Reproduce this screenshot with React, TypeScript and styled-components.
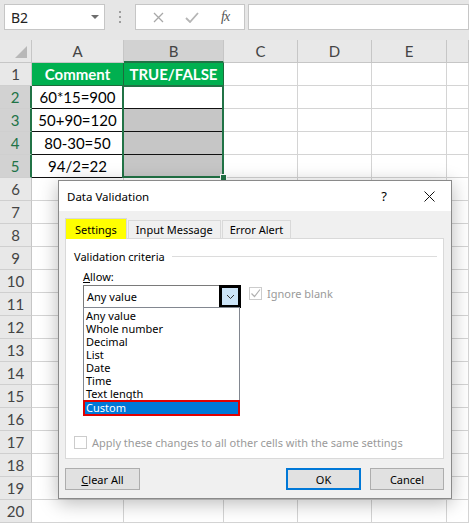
import React from 'react';
import styled, { createGlobalStyle, css } from 'styled-components';

const Global = createGlobalStyle`
  html, body { margin: 0; padding: 0; background: #fff; }
  body { width: 469px; height: 524px; overflow: hidden; }
`;

const Page = styled.div`
  position: relative;
  width: 469px;
  height: 524px;
  overflow: hidden;
  background: #fff;
  font-family: Lato, "Liberation Sans", sans-serif;
`;

/* ---------- formula bar ---------- */
const TopBar = styled.div`
  height: 40px;
  box-sizing: border-box;
  background: #e6e6e6;
  display: flex;
  align-items: flex-start;
  padding: 4px 0 0 4px;
`;

const Field = styled.div<{ $w?: number; $grow?: boolean }>`
  box-sizing: border-box;
  height: 26px;
  background: #fff;
  border: 1px solid #c6c6c6;
  display: flex;
  align-items: center;
  ${p => (p.$grow ? 'flex: 1;' : `width: ${p.$w}px;`)}
`;

const NameBox = styled(Field)`
  justify-content: space-between;
  padding: 0 5px 0 6px;
  font: 14px "Noto Sans", sans-serif;
  color: #222;
`;

const Caret = styled.span`
  width: 0;
  height: 0;
  border-left: 4px solid transparent;
  border-right: 4px solid transparent;
  border-top: 4px solid #6d6d6d;
`;

const Grip = styled.div`
  width: 30px;
  height: 26px;
  display: flex;
  flex-direction: column;
  align-items: center;
  justify-content: center;
  gap: 3px;
`;

const GripDot = styled.span`
  width: 2px;
  height: 2px;
  background: #9d9d9d;
`;

const FxBox = styled(Field)`
  margin-right: 3px;
  justify-content: space-around;
  padding: 0 4px 0 6px;
`;

const FxText = styled.span`
  font: italic 14px "Liberation Serif", serif;
  color: #555;
  letter-spacing: -1px;
`;

/* ---------- sheet ---------- */
const Sheet = styled.div`
  display: grid;
  grid-template-columns: 32px 92px 100px 74px 74px 75px 1fr;
  grid-template-rows: repeat(21, 23px);
  font-size: 15px;
`;

const Slot = css<{ $r: number; $c: number }>`
  grid-row: ${p => p.$r + 1};
  grid-column: ${p => p.$c + 1};
`;

const Corner = styled.div<{ $r: number; $c: number }>`
  ${Slot}
  box-sizing: border-box;
  background: #e8e8e8;
  border-right: 1px solid #c6c6c6;
  border-bottom: 1px solid #c6c6c6;
  display: flex;
  align-items: flex-end;
  justify-content: flex-end;
  padding: 0 4px 4px 0;
`;

const CornerTri = styled.span`
  width: 0;
  height: 0;
  border-left: 12px solid transparent;
  border-bottom: 12px solid #b8b8b8;
`;

const ColHead = styled.div<{ $r: number; $c: number; $sel?: boolean }>`
  ${Slot}
  box-sizing: border-box;
  background: ${p => (p.$sel ? '#d2d2d2' : '#e8e8e8')};
  border-right: 1px solid #c6c6c6;
  border-bottom: ${p => (p.$sel ? '2px solid #217346' : '1px solid #c6c6c6')};
  color: #444;
  display: flex;
  align-items: center;
  justify-content: center;
`;

const RowHead = styled.div<{ $r: number; $c: number; $sel?: boolean }>`
  ${Slot}
  box-sizing: border-box;
  background: ${p => (p.$sel ? '#d2d2d2' : '#e8e8e8')};
  border-right: ${p => (p.$sel ? '2px solid #217346' : '1px solid #c6c6c6')};
  border-bottom: 1px solid #cfcfcf;
  color: ${p => (p.$sel ? '#217346' : '#444')};
  display: flex;
  align-items: center;
  justify-content: center;
`;

type Kind = 'plain' | 'title' | 'data';

const Cell = styled.div<{ $r: number; $c: number; $kind: Kind; $fill?: boolean }>`
  ${Slot}
  box-sizing: border-box;
  border-right: 1px solid #d4d4d4;
  border-bottom: 1px solid #d4d4d4;
  display: flex;
  align-items: center;
  justify-content: center;
  color: #000;
  white-space: nowrap;
  overflow: hidden;
  ${p =>
    p.$kind === 'title' &&
    css`
      background: #00b050;
      color: #fff;
      font-weight: 700;
      border-color: #1d6b3c;
    `}
  ${p =>
    p.$kind === 'data' &&
    css`
      background: ${p.$fill ? '#c6c6c6' : '#fff'};
      border-color: #111;
    `}
`;

const Selection = styled.div`
  grid-column: 3;
  grid-row: 3 / 7;
  margin: -1px 0 0 -2px;
  border: 2px solid #217346;
  position: relative;
  pointer-events: none;
  &::after {
    content: '';
    position: absolute;
    right: -5px;
    bottom: -5px;
    width: 5px;
    height: 5px;
    background: #217346;
    border: 1px solid #fff;
  }
`;

/* ---------- dialog ---------- */
const Dialog = styled.div`
  position: absolute;
  left: 58px;
  top: 180px;
  width: 394px;
  height: 319px;
  box-sizing: border-box;
  border: 1px solid #8a8a8a;
  background: #f0f0f0;
  box-shadow: 0 4px 18px rgba(0, 0, 0, 0.28);
  display: flex;
  flex-direction: column;
  font: 11px "Noto Sans", sans-serif;
  color: #000;
`;

const TitleBar = styled.div`
  height: 30px;
  background: #fff;
  display: flex;
  align-items: center;
  padding-left: 8px;
  font-size: 11.5px;
`;

const TitleText = styled.span`
  flex: 1;
`;

const TitleBtn = styled.span<{ $w: number }>`
  width: ${p => p.$w}px;
  display: flex;
  justify-content: center;
  align-items: center;
  font-size: 13px;
`;

const Body = styled.div`
  flex: 1;
  display: flex;
  flex-direction: column;
  padding: 6px 7px 8px 6px;
`;

const TabRow = styled.div`
  height: 21px;
  display: flex;
  align-items: flex-end;
  gap: 1px;
`;

const Tab = styled.div<{ $active?: boolean }>`
  box-sizing: border-box;
  height: ${p => (p.$active ? 21 : 18)}px;
  padding: 0 ${p => (p.$active ? 9 : 7)}px;
  background: ${p => (p.$active ? '#ffff00' : '#f0f0f0')};
  border: 1px solid #d9d9d9;
  border-bottom: none;
  display: flex;
  align-items: center;
  margin-bottom: ${p => (p.$active ? -1 : 0)}px;
  position: relative;
`;

const Panel = styled.div`
  box-sizing: border-box;
  height: 221px;
  background: #fff;
  border: 1px solid #d9d9d9;
  padding: 9px 6px 0 8px;
  display: flex;
  flex-direction: column;
`;

const GroupHead = styled.div`
  height: 16px;
  display: flex;
  align-items: center;
  gap: 7px;
`;

const GroupLine = styled.span`
  flex: 1;
  height: 1px;
  background: #dcdcdc;
`;

const Indent = styled.div`
  padding-left: 9px;
  display: flex;
  flex-direction: column;
`;

const Label = styled.div`
  height: 16px;
  margin-top: 4px;
  display: flex;
  align-items: center;
`;

const U = styled.span`
  text-decoration: underline;
`;

const ComboRow = styled.div`
  margin-top: 1px;
  display: flex;
  align-items: flex-start;
  gap: 8px;
`;

const ComboCol = styled.div`
  width: 158px;
  display: flex;
  flex-direction: column;
`;

const Combo = styled.div`
  box-sizing: border-box;
  height: 23px;
  border: 1px solid #7a7a7a;
  display: flex;
  align-items: center;
  justify-content: space-between;
  padding-left: 3px;
`;

const DropBtn = styled.span`
  box-sizing: border-box;
  width: 22px;
  height: 23px;
  margin: -1px -1px -1px 0;
  border: 3px solid #000;
  background: #cce4f7;
  display: flex;
  align-items: center;
  justify-content: center;
`;

const List = styled.div`
  box-sizing: border-box;
  width: 157px;
  height: 109px;
  margin-top: -1px;
  border: 1px solid #828790;
  display: flex;
  flex-direction: column;
  padding-top: 1px;
  background: #fff;
`;

const Item = styled.div<{ $sel?: boolean }>`
  height: 13px;
  line-height: 13px;
  padding-left: 2px;
  white-space: nowrap;
  ${p =>
    p.$sel &&
    css`
      margin: 0 -1px;
      height: 16px;
      line-height: 12px;
      box-sizing: border-box;
      background: #0078d7;
      color: #fff;
      border: 2px solid #e00000;
      padding-left: 1px;
    `}
`;

const CheckRow = styled.div<{ $top?: number }>`
  display: flex;
  align-items: center;
  gap: 5px;
  color: #9a9a9a;
  margin-top: ${p => p.$top ?? 0}px;
  height: 16px;
`;

const CheckBox = styled.span`
  box-sizing: border-box;
  width: 13px;
  height: 13px;
  border: 1px solid #cccccc;
  background: #fff;
  display: flex;
  align-items: center;
  justify-content: center;
`;

const Footer = styled.div`
  margin-top: 9px;
  display: flex;
  align-items: center;
`;

const Button = styled.div<{ $def?: boolean; $w?: number; $mr?: number }>`
  box-sizing: border-box;
  width: ${p => p.$w ?? 75}px;
  height: 22px;
  background: #e1e1e1;
  border: ${p => (p.$def ? '2px solid #0078d7' : '1px solid #adadad')};
  display: flex;
  align-items: center;
  justify-content: center;
  margin-right: ${p => p.$mr ?? 0}px;
`;

const Spacer = styled.div`
  flex: 1;
`;

const cols = ['A', 'B', 'C', 'D', 'E', ''];
const dataA = ['60*15=900', '50+90=120', '80-30=50', '94/2=22'];
const listItems = ['Any value', 'Whole number', 'Decimal', 'List', 'Date', 'Time', 'Text length'];

function renderRow(r: number) {
  const cells: React.ReactNode[] = [];
  cells.push(
    <RowHead key={`h${r}`} $r={r} $c={0} $sel={r >= 2 && r <= 5}>
      {r}
    </RowHead>
  );
  for (let c = 0; c < cols.length; c++) {
    let kind: Kind = 'plain';
    let text = '';
    let fill = false;
    if (r === 1 && c < 2) {
      kind = 'title';
      text = c === 0 ? 'Comment' : 'TRUE/FALSE';
    } else if (r >= 2 && r <= 5 && c < 2) {
      kind = 'data';
      if (c === 0) text = dataA[r - 2];
      else fill = r >= 3;
    }
    cells.push(
      <Cell key={`${r}-${c}`} $r={r} $c={c + 1} $kind={kind} $fill={fill}>
        {text}
      </Cell>
    );
  }
  return cells;
}

export default function App() {
  const rows: number[] = [];
  for (let i = 1; i <= 20; i++) rows.push(i);
  return (
    <Page>
      <Global />
      <TopBar>
        <NameBox $w={101}>
          <span>B2</span>
          <Caret />
        </NameBox>
        <Grip>
          <GripDot />
          <GripDot />
          <GripDot />
        </Grip>
        <FxBox $w={110}>
          <svg width="11" height="11" viewBox="0 0 11 11">
            <path d="M1 1 L10 10 M10 1 L1 10" stroke="#a8a8a8" strokeWidth="1.3" fill="none" />
          </svg>
          <svg width="14" height="11" viewBox="0 0 14 11">
            <path d="M1 6 L5 10 L13 1" stroke="#b5b5b5" strokeWidth="1.8" fill="none" />
          </svg>
          <FxText>fx</FxText>
        </FxBox>
        <Field $grow />
      </TopBar>
      <Sheet>
        <Corner $r={0} $c={0}>
          <CornerTri />
        </Corner>
        {cols.map((c, i) => (
          <ColHead key={i} $r={0} $c={i + 1} $sel={c === 'B'}>
            {c}
          </ColHead>
        ))}
        {rows.map(r => renderRow(r))}
        <Selection />
      </Sheet>

      <Dialog>
        <TitleBar>
          <TitleText>Data Validation</TitleText>
          <TitleBtn $w={46}>?</TitleBtn>
          <TitleBtn $w={44}>
            <svg width="11" height="11" viewBox="0 0 11 11">
              <path d="M0.5 0.5 L10.5 10.5 M10.5 0.5 L0.5 10.5" stroke="#111" strokeWidth="1" fill="none" />
            </svg>
          </TitleBtn>
        </TitleBar>
        <Body>
          <TabRow>
            <Tab $active>Settings</Tab>
            <Tab>Input Message</Tab>
            <Tab>Error Alert</Tab>
          </TabRow>
          <Panel>
            <GroupHead>
              <span>Validation criteria</span>
              <GroupLine />
            </GroupHead>
            <Indent>
              <Label>
                <span>
                  <U>A</U>llow:
                </span>
              </Label>
              <ComboRow>
                <ComboCol>
                  <Combo>
                    <span>Any value</span>
                    <DropBtn>
                      <svg width="9" height="6" viewBox="0 0 9 6">
                        <path d="M1 1 L4.5 4.5 L8 1" stroke="#333" strokeWidth="1" fill="none" />
                      </svg>
                    </DropBtn>
                  </Combo>
                  <List>
                    {listItems.map(t => (
                      <Item key={t}>{t}</Item>
                    ))}
                    <Item $sel>Custom</Item>
                  </List>
                </ComboCol>
                <CheckRow $top={0}>
                  <CheckBox>
                    <svg width="11" height="11" viewBox="0 0 11 11">
                      <path d="M1.5 5.5 L4.5 8.5 L10 1.5" stroke="#b0b0b0" strokeWidth="1.2" fill="none" />
                    </svg>
                  </CheckBox>
                  <span>Ignore blank</span>
                </CheckRow>
              </ComboRow>
            </Indent>
            <CheckRow $top={18}>
              <CheckBox />
              <span>Apply these changes to all other cells with the same settings</span>
            </CheckRow>
          </Panel>
          <Footer>
            <Button>
              <span>
                <U>C</U>lear All
              </span>
            </Button>
            <Spacer />
            <Button $def $mr={9}>
              OK
            </Button>
            <Button $w={74}>Cancel</Button>
          </Footer>
        </Body>
      </Dialog>
    </Page>
  );
}
